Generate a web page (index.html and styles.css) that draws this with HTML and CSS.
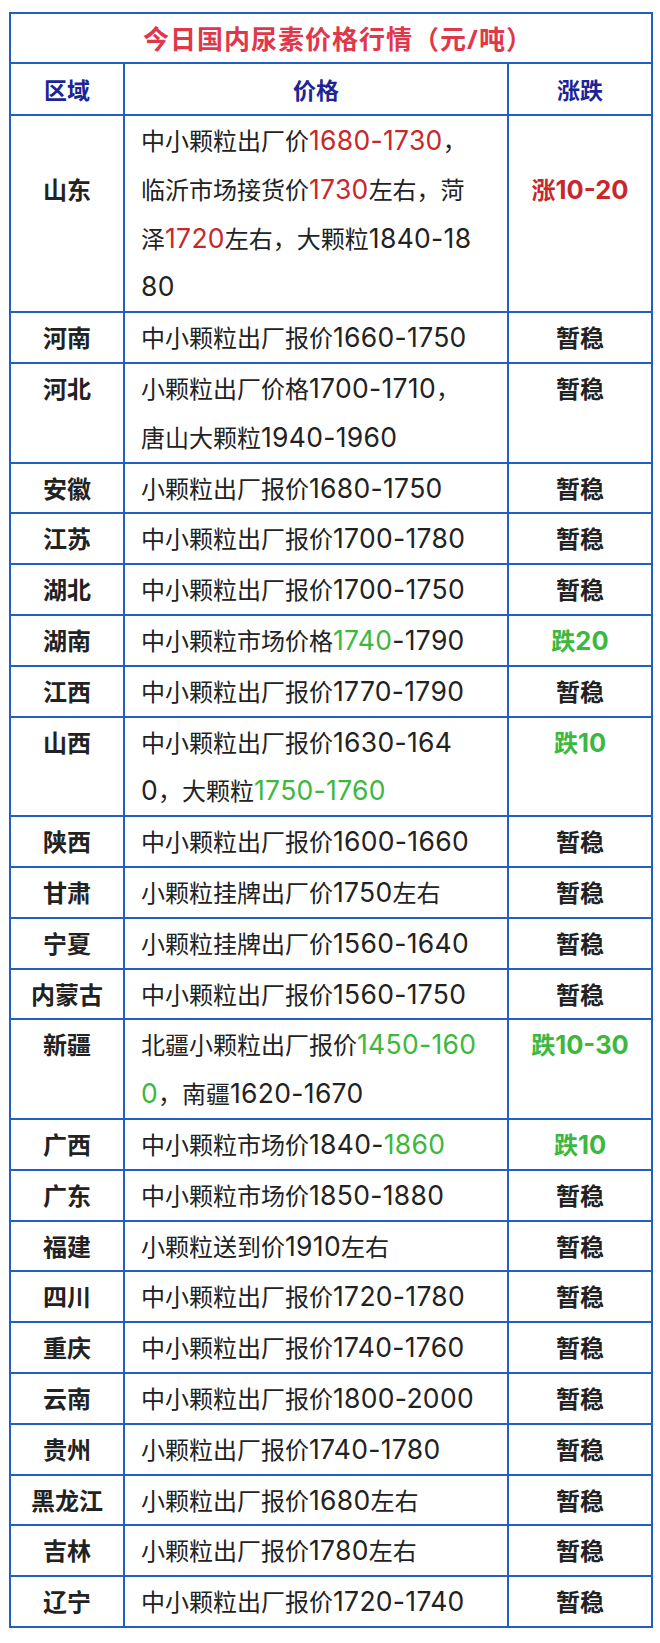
FILE: index.html
```html
<!DOCTYPE html>
<html lang="zh-CN">
<head>
<meta charset="utf-8">
<title>今日国内尿素价格行情</title>
<link rel="stylesheet" href="styles.css">
</head>
<body>
<table class="price-table">
  <colgroup>
    <col class="col-region">
    <col class="col-price">
    <col class="col-change">
  </colgroup>
  <thead>
    <tr class="title-row"><th colspan="3">今日国内尿素价格行情（元/吨）</th></tr>
    <tr class="head-row"><th>区域</th><th>价格</th><th>涨跌</th></tr>
  </thead>
  <tbody>
    <tr><td class="region second"><span>山东</span></td><td class="price">中小颗粒出厂价<span class="num up">1680-1730</span>，<br>临沂市场接货价<span class="num up">1730</span>左右，菏<br>泽<span class="num up">1720</span>左右，大颗粒<span class="num">1840-18</span><br><span class="num">80</span></td><td class="change up second"><span>涨<b class="num">10-20</b></span></td></tr>
    <tr><td class="region">河南</td><td class="price">中小颗粒出厂报价<span class="num">1660-1750</span></td><td class="change">暂稳</td></tr>
    <tr><td class="region">河北</td><td class="price">小颗粒出厂价格<span class="num">1700-1710</span>，<br>唐山大颗粒<span class="num">1940-1960</span></td><td class="change">暂稳</td></tr>
    <tr><td class="region">安徽</td><td class="price">小颗粒出厂报价<span class="num">1680-1750</span></td><td class="change">暂稳</td></tr>
    <tr><td class="region">江苏</td><td class="price">中小颗粒出厂报价<span class="num">1700-1780</span></td><td class="change">暂稳</td></tr>
    <tr><td class="region">湖北</td><td class="price">中小颗粒出厂报价<span class="num">1700-1750</span></td><td class="change">暂稳</td></tr>
    <tr><td class="region">湖南</td><td class="price">中小颗粒市场价格<span class="num down">1740</span><span class="num">-1790</span></td><td class="change down">跌<b class="num">20</b></td></tr>
    <tr><td class="region">江西</td><td class="price">中小颗粒出厂报价<span class="num">1770-1790</span></td><td class="change">暂稳</td></tr>
    <tr><td class="region">山西</td><td class="price">中小颗粒出厂报价<span class="num">1630-164</span><br><span class="num">0</span>，大颗粒<span class="num down">1750-1760</span></td><td class="change down">跌<b class="num">10</b></td></tr>
    <tr><td class="region">陕西</td><td class="price">中小颗粒出厂报价<span class="num">1600-1660</span></td><td class="change">暂稳</td></tr>
    <tr><td class="region">甘肃</td><td class="price">小颗粒挂牌出厂价<span class="num">1750</span>左右</td><td class="change">暂稳</td></tr>
    <tr><td class="region">宁夏</td><td class="price">小颗粒挂牌出厂价<span class="num">1560-1640</span></td><td class="change">暂稳</td></tr>
    <tr><td class="region">内蒙古</td><td class="price">中小颗粒出厂报价<span class="num">1560-1750</span></td><td class="change">暂稳</td></tr>
    <tr><td class="region">新疆</td><td class="price">北疆小颗粒出厂报价<span class="num down">1450-160</span><br><span class="num down">0</span>，南疆<span class="num">1620-1670</span></td><td class="change down">跌<b class="num">10-30</b></td></tr>
    <tr><td class="region">广西</td><td class="price">中小颗粒市场价<span class="num">1840-</span><span class="num down">1860</span></td><td class="change down">跌<b class="num">10</b></td></tr>
    <tr><td class="region">广东</td><td class="price">中小颗粒市场价<span class="num">1850-1880</span></td><td class="change">暂稳</td></tr>
    <tr><td class="region">福建</td><td class="price">小颗粒送到价<span class="num">1910</span>左右</td><td class="change">暂稳</td></tr>
    <tr><td class="region">四川</td><td class="price">中小颗粒出厂报价<span class="num">1720-1780</span></td><td class="change">暂稳</td></tr>
    <tr><td class="region">重庆</td><td class="price">中小颗粒出厂报价<span class="num">1740-1760</span></td><td class="change">暂稳</td></tr>
    <tr><td class="region">云南</td><td class="price">中小颗粒出厂报价<span class="num">1800-2000</span></td><td class="change">暂稳</td></tr>
    <tr><td class="region">贵州</td><td class="price">小颗粒出厂报价<span class="num">1740-1780</span></td><td class="change">暂稳</td></tr>
    <tr><td class="region">黑龙江</td><td class="price">小颗粒出厂报价<span class="num">1680</span>左右</td><td class="change">暂稳</td></tr>
    <tr><td class="region">吉林</td><td class="price">小颗粒出厂报价<span class="num">1780</span>左右</td><td class="change">暂稳</td></tr>
    <tr><td class="region">辽宁</td><td class="price">中小颗粒出厂报价<span class="num">1720-1740</span></td><td class="change">暂稳</td></tr>
  </tbody>
</table>
</body>
</html>
```

FILE: styles.css
```css
html, body {
  margin: 0;
  padding: 0;
  background: #ffffff;
}

body {
  padding: 12px 9px 16px 9px;
  font-family: "Noto Sans", "Noto Sans CJK SC", sans-serif;
  color: #222222;
}

.price-table {
  width: 642px;
  border-collapse: collapse;
  border: 2px solid #2160c0;
  table-layout: fixed;
}

.col-region { width: 114px; }
.col-price { width: 384px; }
.col-change { width: 144px; }

.price-table th,
.price-table td {
  border: 2px solid #2160c0;
  padding: 0;
  vertical-align: top;
}

.title-row th {
  height: 48px;
  padding-left: 14px;
  font-size: 26px;
  font-weight: 700;
  color: #e0384a;
  text-align: center;
  vertical-align: middle;
  letter-spacing: 1px;
}

.head-row th {
  height: 50px;
  font-size: 23px;
  font-weight: 700;
  color: #1b2598;
  text-align: center;
  vertical-align: middle;
}

.price-table td {
  font-family: "Noto Sans CJK SC", sans-serif;
  font-size: 24px;
  line-height: 48.8px;
}

.region {
  text-align: center;
  font-weight: 700;
  color: #222222;
}

.price {
  padding-left: 16px !important;
  padding-right: 2px !important;
  color: #222222;
  white-space: nowrap;
}

.num {
  font-family: Inter, "Noto Sans", sans-serif;
  font-size: 26.5px;
  line-height: 1;
  letter-spacing: 0.3px;
}

.change {
  text-align: center;
  font-weight: 700;
  color: #222222;
}

.change .num {
  font-weight: 700;
  letter-spacing: 0;
  font-size: 25.5px;
}

.second > span {
  display: block;
  margin-top: 48.8px;
}

.price .up,
.change.up {
  color: #c8272d;
}

.price .down,
.change.down {
  color: #3cb83c;
}
```
